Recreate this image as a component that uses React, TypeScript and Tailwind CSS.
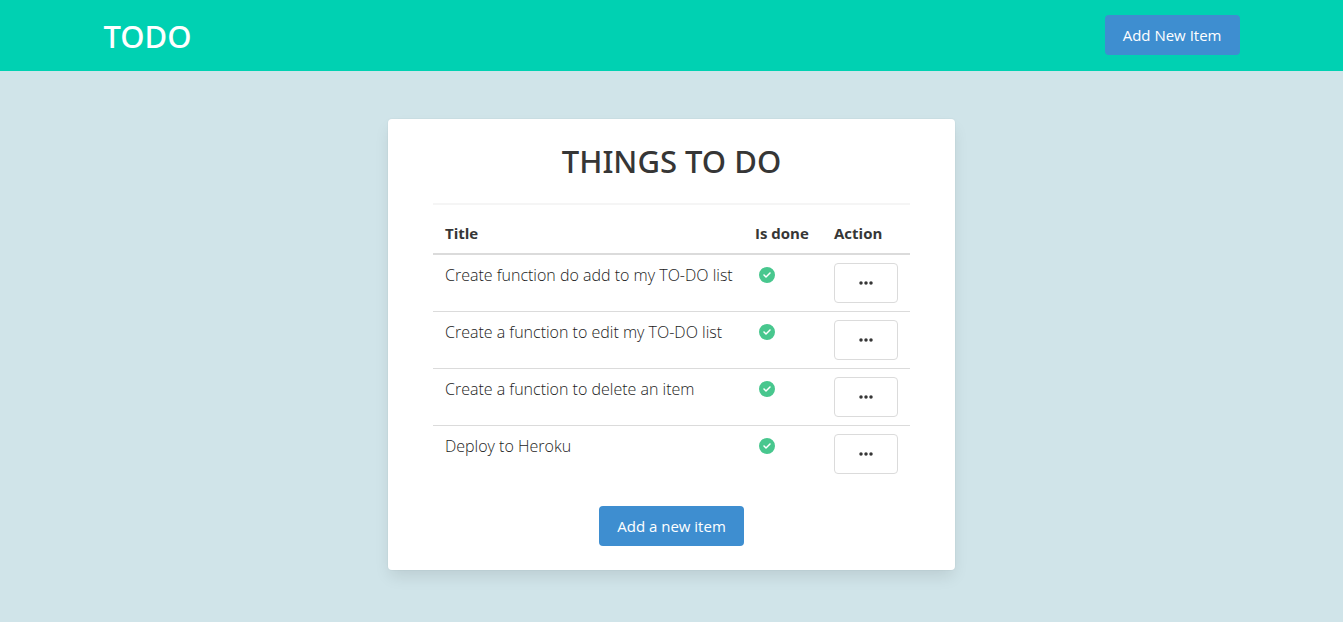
import React from "react";
import { FaCircleCheck, FaEllipsis } from "react-icons/fa6";

const items: { title: string; done: boolean }[] = [
  { title: "Create function do add to my TO-DO list", done: true },
  { title: "Create a function to edit my TO-DO list", done: true },
  { title: "Create a function to delete an item", done: true },
  { title: "Deploy to Heroku", done: true },
];

function PrimaryButton({ children }: { children: React.ReactNode }) {
  return (
    <button
      type="button"
      className="h-10 rounded bg-[#3e8ed0] px-[18px] text-[15px] leading-6 whitespace-nowrap text-white hover:bg-[#3082c5]"
    >
      {children}
    </button>
  );
}

export default function App() {
  return (
    <div className="flex min-h-screen flex-col bg-[#d0e4e9] font-['Open_Sans',sans-serif] text-base leading-6 text-[#363636]">
      <header className="bg-[#00d1b2] px-8 pt-[15px] pb-4">
        <div className="mx-auto flex max-w-[1136px] items-center justify-between">
          <h1 className="pt-0.5 font-['Noto_Sans',sans-serif] text-[31px] leading-9 font-medium text-white">TODO</h1>
          <PrimaryButton>Add New Item</PrimaryButton>
        </div>
      </header>
      <main className="flex justify-center px-4 py-12">
        <section className="flex w-full max-w-[567px] flex-col items-center rounded bg-white px-[45px] py-6 shadow-[0_8px_16px_-2px_rgba(10,10,10,0.1),0_0_0_1px_rgba(10,10,10,0.02)]">
          <h2 className="pt-0.5 pb-0.5 font-['Noto_Sans',sans-serif] text-[31px] leading-8 font-medium">THINGS TO DO</h2>
          <hr className="mt-6 w-full border-t-2 border-[#f5f5f5]" />
          <table className="mt-2 w-full table-fixed border-collapse text-left">
            <thead>
              <tr className="border-b-2 border-[#dbdbdb] text-[15px]">
                <th className="px-3 py-2 font-bold">Title</th>
                <th className="w-[79px] px-3 py-2 font-bold whitespace-nowrap">Is done</th>
                <th className="w-[88px] px-3 py-2 font-bold">Action</th>
              </tr>
            </thead>
            <tbody>
              {items.map((item) => (
                <tr key={item.title} className="border-b border-[#dbdbdb] align-top last:border-b-0">
                  <td className="px-3 py-2 font-[350] whitespace-nowrap text-[#1c1c1c]">{item.title}</td>
                  <td className="px-3 py-2">
                    <span className="flex size-6 items-center justify-center text-[#48c78e]">
                      {item.done && <FaCircleCheck size={16} aria-label="Done" />}
                    </span>
                  </td>
                  <td className="px-3 py-2">
                    <button
                      type="button"
                      aria-label={`Actions for ${item.title}`}
                      className="flex h-10 w-16 items-center justify-center rounded border border-[#dbdbdb] bg-white"
                    >
                      <FaEllipsis size={16} />
                    </button>
                  </td>
                </tr>
              ))}
            </tbody>
          </table>
          <div className="mt-6">
            <PrimaryButton>Add a new item</PrimaryButton>
          </div>
        </section>
      </main>
    </div>
  );
}
